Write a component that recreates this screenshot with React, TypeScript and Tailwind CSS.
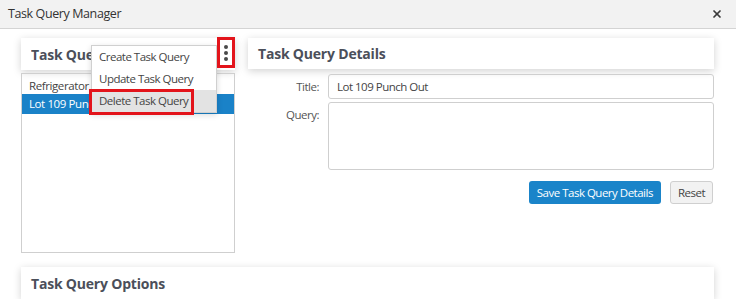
import { X } from 'lucide-react';

const font = { fontFamily: '"Open Sans", "Liberation Sans", sans-serif' };

function CardHeader({ title, className = '' }: { title: string; className?: string }) {
  return (
    <div className={`bg-white shadow-[0_2px_8px_rgba(0,0,0,0.18)] flex items-center px-[10px] ${className}`}>
      <h2 className="text-[14px] font-bold text-[#4b4f5a] tracking-[-0.2px]">{title}</h2>
    </div>
  );
}

export default function App() {
  return (
    <div className="w-[736px] h-[299px] overflow-hidden bg-white text-[#333]" style={font}>
      <div className="h-[29px] bg-[#f2f2f2] border-b border-[#d4d4d4] flex items-center justify-between pl-[8px] pr-[13px]">
        <span className="text-[12.5px] text-[#333] tracking-[-0.4px]">Task Query Manager</span>
        <X className="w-[12px] h-[12px] text-[#3a3a3a]" strokeWidth={3.5} />
      </div>

      <div className="pl-[21px] pr-[22px] pt-[9px]">
        <div className="flex gap-[13px]">
          <div className="relative w-[214px] shrink-0">
            <div className="h-[32px] bg-white shadow-[0_2px_8px_rgba(0,0,0,0.18)] flex items-center pl-[10px]">
              <h2 className="w-[60px] overflow-hidden whitespace-nowrap text-[14px] font-bold text-[#4b4f5a] tracking-[-0.2px]">Task Queries</h2>
            </div>
            <div className="mt-[3px] h-[180px] border border-[#cfcfcf] pt-[3px] text-[11.5px] tracking-[-0.4px]">
              <div className="h-[17px] flex items-center px-[7px] text-[#444]">
                <span className="w-[62px] overflow-hidden whitespace-nowrap">Refrigerator</span>
              </div>
              <div className="h-[20px] flex items-center px-[7px] bg-[#1a82c8] text-white">
                <span className="w-[62px] overflow-hidden whitespace-nowrap">Lot 109 Punch Out</span>
              </div>
            </div>

            <div className="absolute left-[70px] top-[7px] w-[126px] bg-white border border-[#d0d0d0] shadow-[0_2px_6px_rgba(0,0,0,0.15)] text-[11.5px] text-[#444] tracking-[-0.5px]">
              <div className="h-[22px] flex items-center px-[7px]">Create Task Query</div>
              <div className="h-[22px] flex items-center px-[7px]">Update Task Query</div>
              <div className="h-[22px] flex items-center px-[7px] bg-[#e3e3e3]">Delete Task Query</div>
            </div>

            <div className="absolute left-[196px] top-[-1px] w-[18px] h-[31px] bg-white border-[3px] border-[#e3141b] flex flex-col items-center justify-center gap-[2px]">
              <span className="w-[4px] h-[4px] rounded-full bg-[#4a4a4a]" />
              <span className="w-[4px] h-[4px] rounded-full bg-[#4a4a4a]" />
              <span className="w-[4px] h-[4px] rounded-full bg-[#4a4a4a]" />
            </div>
            <div className="absolute left-[68px] top-[51px] w-[105px] h-[26px] border-[3px] border-[#e3141b]" />
          </div>

          <div className="flex-1">
            <CardHeader title="Task Query Details" className="h-[31px]" />
            <div className="mt-[5px] grid grid-cols-[71px_1fr] gap-x-[9px] gap-y-[3px] text-[11.5px] tracking-[-0.5px]">
              <label className="text-right text-[#555] pt-[4px]">Title:</label>
              <div className="h-[25px] border border-[#cfcfcf] rounded-[3px] flex items-center px-[8px] text-[#444]">Lot 109 Punch Out</div>
              <label className="text-right text-[#555] pt-[4px]">Query:</label>
              <div className="h-[68px] border border-[#cfcfcf] rounded-[3px]" />
            </div>
            <div className="mt-[11px] flex justify-end gap-[9px] pr-[1px] text-[11.5px] tracking-[-0.5px]">
              <button className="h-[23px] px-[8px] rounded-[3px] bg-[#1a84c9] text-white">Save Task Query Details</button>
              <button className="h-[23px] px-[7px] rounded-[3px] bg-[#f2f2f2] border border-[#cfcfcf] text-[#444]">Reset</button>
            </div>
          </div>
        </div>

        <CardHeader title="Task Query Options" className="mt-[14px] h-[32px]" />
      </div>
    </div>
  );
}
